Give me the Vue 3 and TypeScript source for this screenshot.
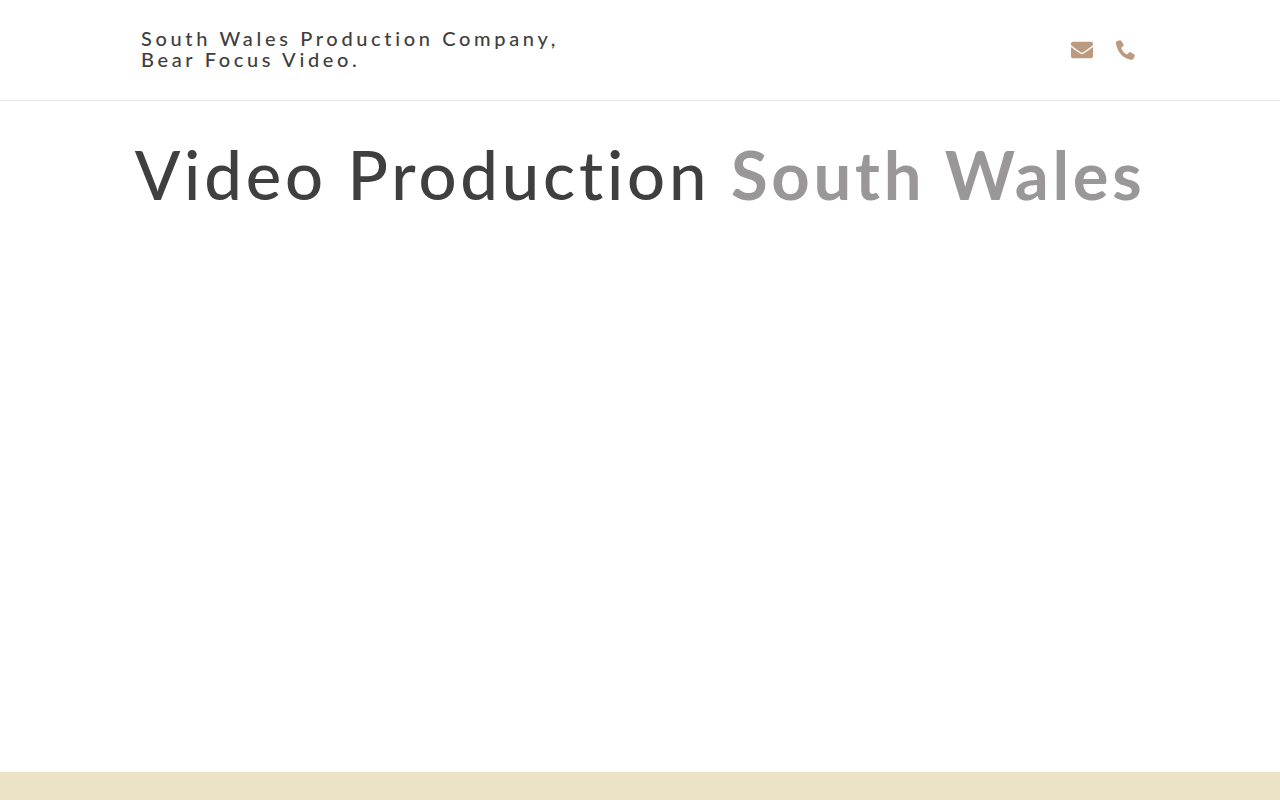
<script setup lang="ts">
const brand = ['South Wales Production Company,', 'Bear Focus Video.']
</script>

<template>
  <div class="page">
    <header class="top">
      <div class="top-inner">
        <a class="brand" href="#">
          <span v-for="line in brand" :key="line">{{ line }}</span>
        </a>
        <nav class="contact">
          <a href="#" aria-label="Email">
            <svg class="mail" viewBox="0 0 512 512">
              <path d="M502.3 190.8c3.9-3.1 9.7-.2 9.7 4.7V400c0 26.5-21.5 48-48 48H48c-26.5 0-48-21.5-48-48V195.6c0-5 5.7-7.8 9.7-4.7 22.4 17.4 52.1 39.5 154.1 113.6 21.1 15.4 56.7 47.8 92.2 47.6 35.7.3 72-32.8 92.3-47.6 102-74.1 131.6-96.3 154-113.7zM256 320c23.2.4 56.6-29.2 73.4-41.4 132.7-96.3 142.8-104.7 173.4-128.7 5.8-4.5 9.2-11.500 9.2-18.9v-19c0-26.5-21.5-48-48-48H48C21.5 64 0 85.5 0 112v19c0 7.4 3.4 14.3 9.2 18.9 30.6 23.9 40.7 32.4 173.4 128.7 16.8 12.2 50.2 41.8 73.4 41.400z" />
            </svg>
          </a>
          <a href="#" aria-label="Phone">
            <svg class="phone" viewBox="1 1 19 19">
              <path d="M4.6 1.2 1.900 2.300C.9 2.800.7 3.800 1 5c1.200 4.500 2.800 7.800 5.400 10.400 2.100 2.100 5 3.600 8.600 4.300 1.200.2 2.200-.2 2.700-1.100l1.100-2.300c.3-.6.1-1.200-.5-1.600l-3.400-2c-.5-.3-1.100-.2-1.500.2l-1.300 1.500c-.3.300-.7.400-1.100.2-2.400-1.500-3.900-3.300-4.900-5.600-.1-.4 0-.8.300-1l1.500-1.300c.4-.4.5-1 .3-1.500L5.900 1.700c-.3-.5-.8-.7-1.300-.5z" />
            </svg>
          </a>
        </nav>
      </div>
    </header>

    <main class="content">
      <h1>Video Production <strong>South Wales</strong></h1>
    </main>

    <footer class="bottom"></footer>
  </div>
</template>

<style>
html,
body {
  margin: 0;
  background: #fff;
}
</style>

<style scoped>
.page {
  display: flex;
  flex-direction: column;
  min-height: 100vh;
  font-family: Lato, "Open Sans", sans-serif;
  color: #3f3f3f;
}

.top {
  height: 100px;
  border-bottom: 1px solid #e6e6e6;
}

.top-inner {
  display: flex;
  align-items: center;
  justify-content: space-between;
  width: 1000px;
  height: 100%;
  margin: 0 auto;
  padding: 0 0 2px 1px;
  box-sizing: border-box;
}

.brand {
  display: flex;
  flex-direction: column;
  color: #3f3f3f;
  text-decoration: none;
  font-size: 20px;
  line-height: 21px;
  letter-spacing: 3.65px;
  font-weight: 500;
}

.contact {
  display: flex;
  align-items: center;
  gap: 23px;
  padding: 2px 4px 0 0;
}

.contact a {
  display: flex;
}

.contact svg {
  fill: #bc9a7f;
  display: block;
}

.mail {
  width: 22px;
  height: 22px;
}

.phone {
  width: 20px;
  height: 20px;
}

.content {
  flex: 1;
}

h1 {
  margin: 0;
  padding-top: 31px;
  text-align: center;
  font-size: 67px;
  line-height: 84px;
  font-weight: 500;
  letter-spacing: 3.8px;
  white-space: nowrap;
}

h1 strong {
  font-weight: 700;
  color: #999797;
  letter-spacing: 3.7px;
}

.bottom {
  height: 28px;
  background: #ece3c7;
}
</style>
